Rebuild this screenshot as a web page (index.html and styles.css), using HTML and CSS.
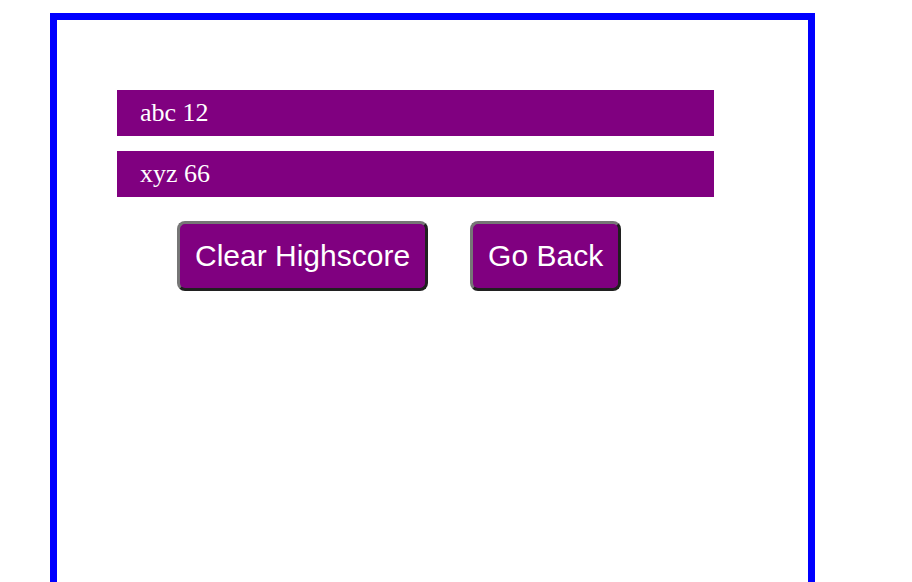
FILE: index.html
```html
<!DOCTYPE html>
<html>
<head>
<meta charset="utf-8">
<link rel="stylesheet" href="styles.css">
</head>
<body>
<div class="frame">
  <ul class="scores">
    <li class="score">abc 12</li>
    <li class="score">xyz 66</li>
  </ul>
  <div class="actions">
    <button class="btn">Clear Highscore</button>
    <button class="btn">Go Back</button>
  </div>
</div>
</body>
</html>
```
FILE: styles.css
```css
html, body {
  margin: 0;
  padding: 0;
  background: #fff;
}
body {
  padding: 13px 0 0 50px;
  height: 582px;
  box-sizing: border-box;
  overflow: hidden;
}
.frame {
  width: 765px;
  height: 600px;
  border: 7px solid #0000ff;
  padding: 70px 0 0 60px;
  box-sizing: border-box;
}
.scores {
  list-style: none;
  margin: 0;
  padding: 0;
  width: 597px;
  display: flex;
  flex-direction: column;
  gap: 15px;
}
.score {
  background: #800080;
  color: #fff;
  font-family: "Liberation Serif", serif;
  font-size: 26px;
  height: 46px;
  line-height: 46px;
  padding-left: 23px;
}
.actions {
  display: flex;
  gap: 42px;
  margin: 24px 0 0 60px;
}
.btn {
  background: #800080;
  color: #fff;
  font-family: "Liberation Sans", Arial, sans-serif;
  font-size: 30px;
  line-height: 34px;
  padding: 15px 15px;
  border: 3px solid;
  border-color: #767676 #202020 #202020 #767676;
  border-radius: 8px;
  margin: 0;
}
```
